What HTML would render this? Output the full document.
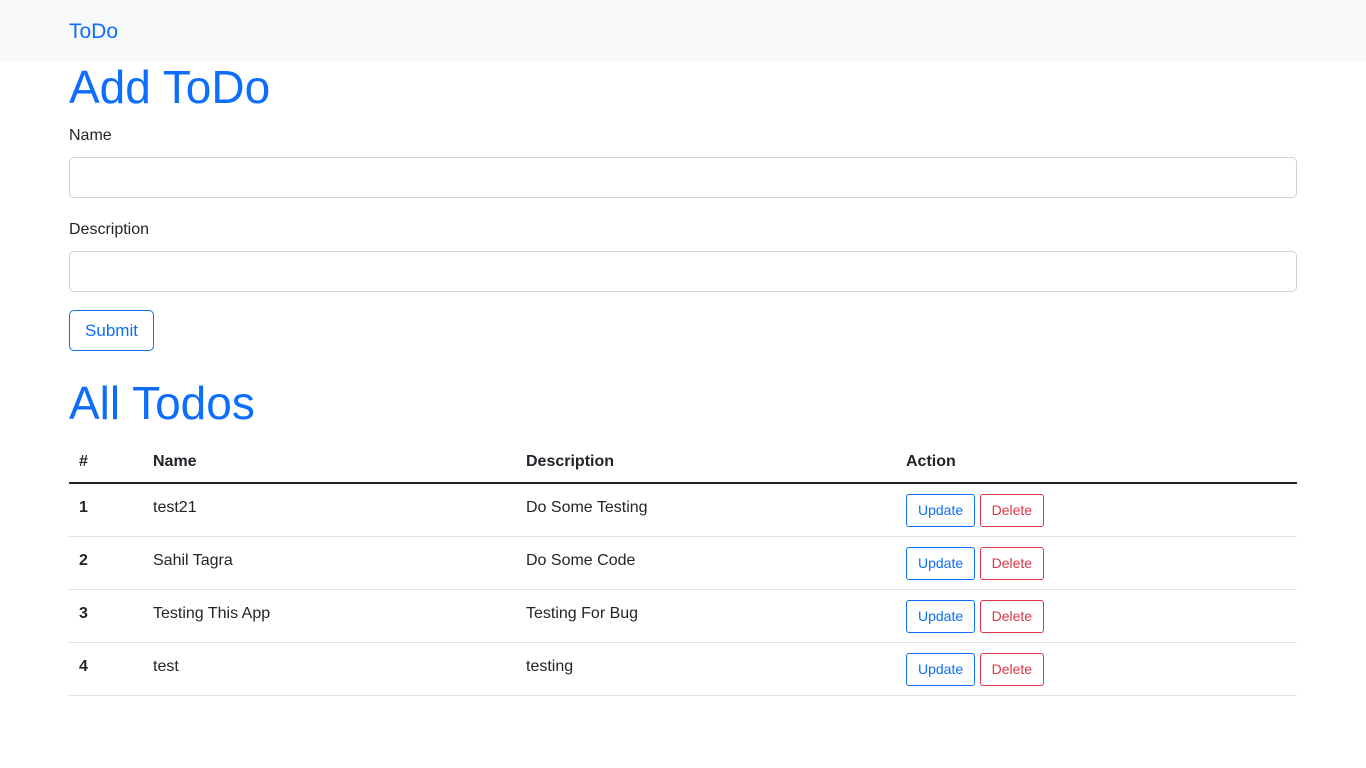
<!DOCTYPE html>
<html><head><meta charset="utf-8">
<style>
*{box-sizing:border-box;margin:0;padding:0}
body{font-family:"Liberation Sans",sans-serif;color:#212529;background:#fff;width:1366px;height:768px;overflow:hidden;font-size:16px}
.nav{height:62px;background:#f8f9fa;position:relative}
.brand{position:absolute;left:69px;top:20px;font-size:21px;color:#0d6efd}
.c{position:absolute;left:69px;width:1228px}
h1{color:#0d6efd;font-weight:500;font-size:46px;line-height:1.2}
.lbl{position:absolute;left:0;font-size:16px}
.inp{position:absolute;left:0;width:1228px;height:41px;border:1px solid #ced4da;border-radius:5px}
.btn{position:absolute;border:1px solid #0d6efd;color:#0d6efd;border-radius:5px;text-align:center;background:#fff}
table{border-collapse:collapse;width:1228px;position:absolute;left:0;table-layout:fixed}
th{font-weight:bold;text-align:left;height:42px;padding:0 10px;border-bottom:2px solid #212529;vertical-align:middle}
td{height:53px;padding:0 10px 4px;border-bottom:1px solid #dee2e6;vertical-align:middle}
td:first-child{font-weight:bold}
td:last-child{padding:1px 10px 0}
.sb{display:inline-block;font-size:14px;height:33px;line-height:31px;border-radius:3px;padding:0 11px;border:1px solid;margin-right:0}
.u{color:#0d6efd;border-color:#0d6efd}
.d{color:#dc3545;border-color:#dc3545}
</style></head><body>
<div class="nav"><div class="brand">ToDo</div></div>
<div class="c" style="top:62px">
<h1 style="position:absolute;top:-2px;left:0">Add ToDo</h1>
<div class="lbl" style="top:65px">Name</div>
<div class="inp" style="top:95px"></div>
<div class="lbl" style="top:159px">Description</div>
<div class="inp" style="top:189px"></div>
<div class="btn" style="top:248px;left:0;width:85px;height:41px;line-height:39px;font-size:17px">Submit</div>
<h1 style="position:absolute;top:314px;left:0">All Todos</h1>
<table style="top:379px">
<tr><th style="width:74px">#</th><th style="width:373px">Name</th><th style="width:380px">Description</th><th>Action</th></tr>
<tr><td>1</td><td>test21</td><td>Do Some Testing</td><td><span class="sb u">Update</span> <span class="sb d">Delete</span></td></tr>
<tr><td>2</td><td>Sahil Tagra</td><td>Do Some Code</td><td><span class="sb u">Update</span> <span class="sb d">Delete</span></td></tr>
<tr><td>3</td><td>Testing This App</td><td>Testing For Bug</td><td><span class="sb u">Update</span> <span class="sb d">Delete</span></td></tr>
<tr><td>4</td><td>test</td><td>testing</td><td><span class="sb u">Update</span> <span class="sb d">Delete</span></td></tr>
</table>
</div>
</body></html>
